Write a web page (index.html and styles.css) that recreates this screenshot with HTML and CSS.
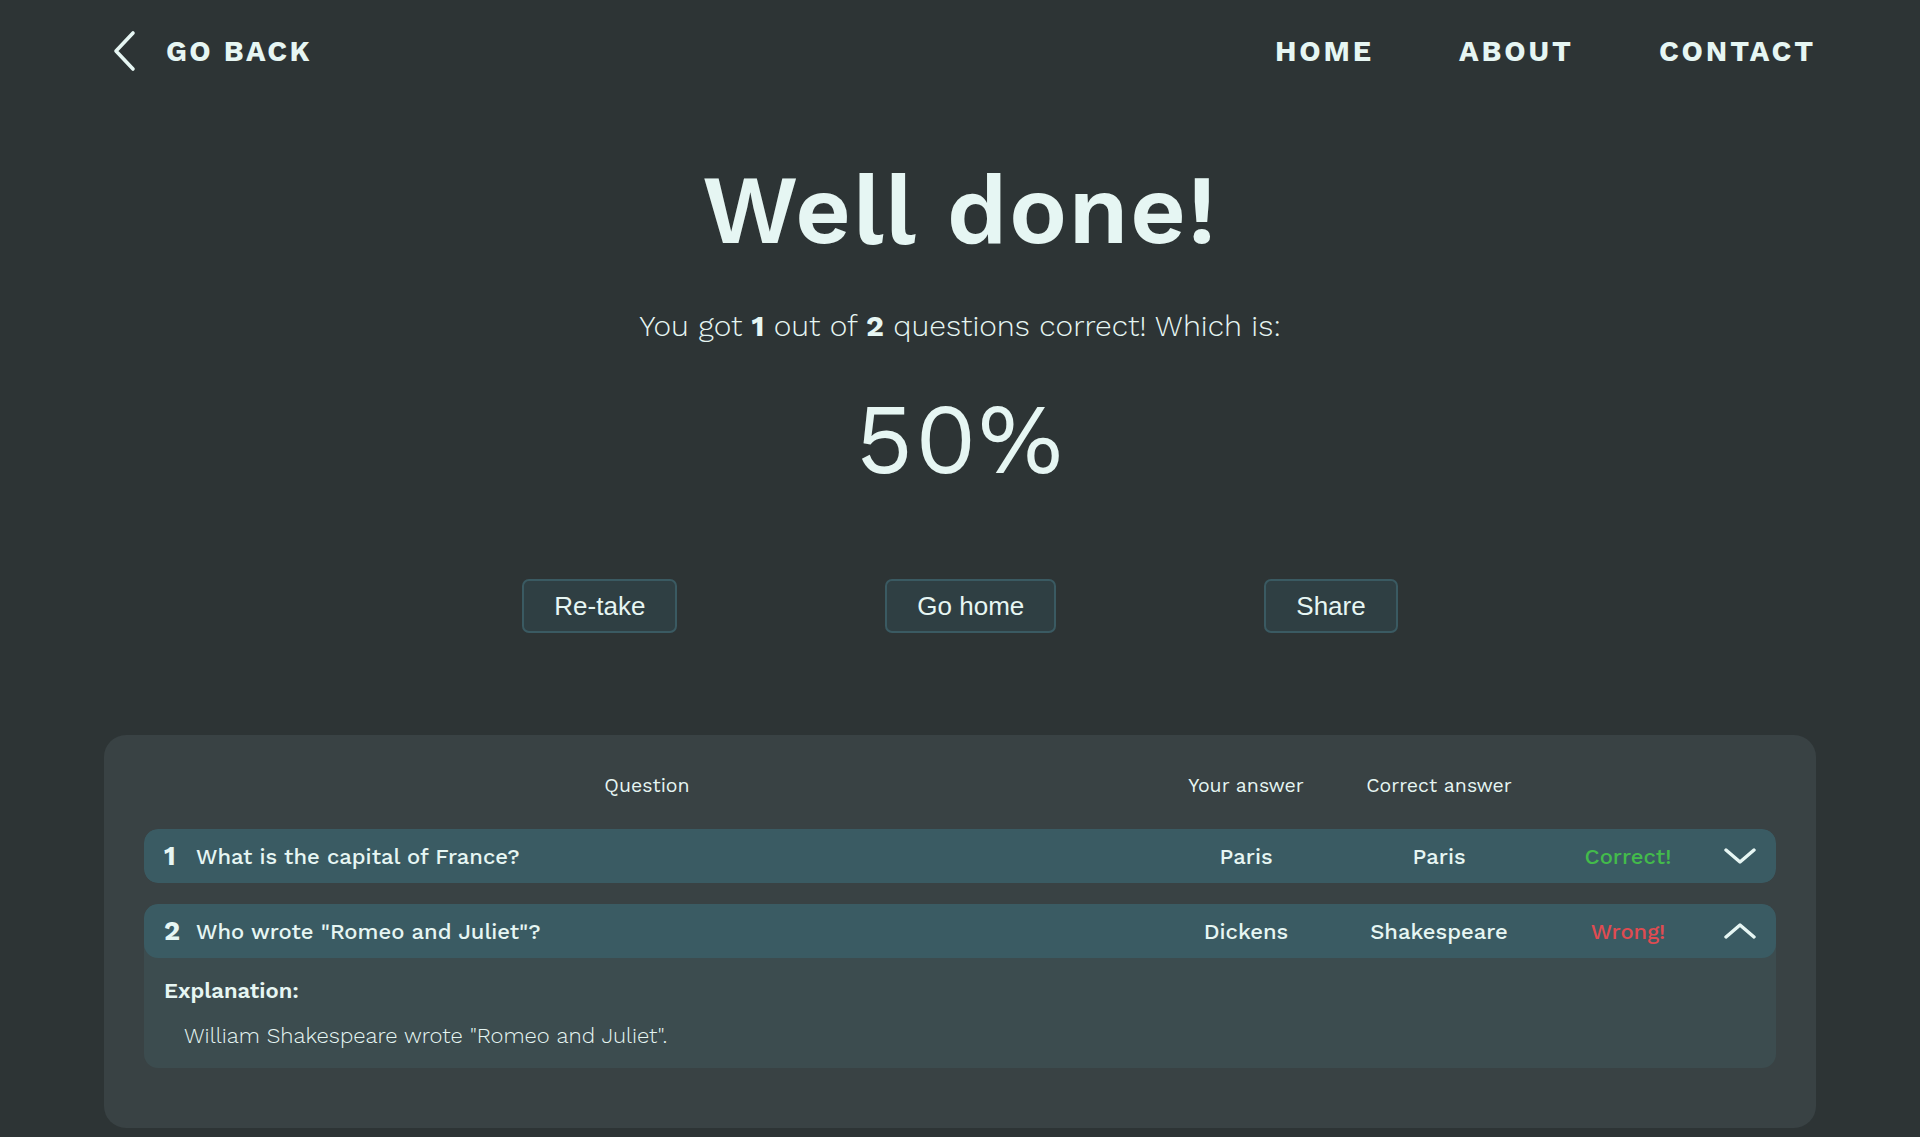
FILE: index.html
```html
<!DOCTYPE html>
<html lang="en">
<head>
<meta charset="utf-8">
<title>Quiz results</title>
<link rel="stylesheet" href="styles.css">
</head>
<body>
<header class="topbar">
  <a class="back" href="#">
    <svg class="back-icon" width="23" height="42" viewBox="0 0 23 42" aria-hidden="true">
      <polyline points="20,3 3,21 20,39" fill="none" stroke="currentColor" stroke-width="3.6" stroke-linecap="round" stroke-linejoin="round"/>
    </svg>
    <span>GO BACK</span>
  </a>
  <nav class="nav">
    <a href="#">HOME</a>
    <a href="#">ABOUT</a>
    <a href="#">CONTACT</a>
  </nav>
</header>

<main>
  <section class="hero">
    <h1 class="title">Well done!</h1>
    <p class="summary">You got <b>1</b> out of <b>2</b> questions correct! Which is:</p>
    <p class="score">50%</p>
    <div class="actions">
      <button class="btn">Re-take</button>
      <button class="btn">Go home</button>
      <button class="btn">Share</button>
    </div>
  </section>

  <section class="results">
    <div class="grid head">
      <span class="h-question">Question</span>
      <span class="center">Your answer</span>
      <span class="center">Correct answer</span>
      <span></span>
      <span></span>
    </div>

    <div class="item">
      <div class="grid row">
        <div class="q"><span class="num">1</span><span>What is the capital of France?</span></div>
        <span class="center">Paris</span>
        <span class="center">Paris</span>
        <span class="center ok">Correct!</span>
        <svg class="chev" width="32" height="16" viewBox="0 0 32 16" aria-hidden="true">
          <polyline points="2,2 16,14 30,2" fill="none" stroke="currentColor" stroke-width="3.4" stroke-linecap="round" stroke-linejoin="round"/>
        </svg>
      </div>
    </div>

    <div class="item open">
      <div class="grid row">
        <div class="q"><span class="num">2</span><span>Who wrote "Romeo and Juliet"?</span></div>
        <span class="center">Dickens</span>
        <span class="center">Shakespeare</span>
        <span class="center bad">Wrong!</span>
        <svg class="chev" width="32" height="16" viewBox="0 0 32 16" aria-hidden="true">
          <polyline points="2,14 16,2 30,14" fill="none" stroke="currentColor" stroke-width="3.4" stroke-linecap="round" stroke-linejoin="round"/>
        </svg>
      </div>
      <div class="explain">
        <p class="explain-title">Explanation:</p>
        <p class="explain-text">William Shakespeare wrote "Romeo and Juliet".</p>
      </div>
    </div>
  </section>
</main>
</body>
</html>
```

FILE: styles.css
```css
* { box-sizing: border-box; }

html, body {
  margin: 0;
  padding: 0;
}

body {
  background: #2d3435;
  color: #e6f6f3;
  font-family: "Work Sans", Inter, "Noto Sans", sans-serif;
  padding-bottom: 9px;
}

a { color: inherit; text-decoration: none; }

/* ---------- top bar ---------- */
.topbar {
  height: 101px;
  padding: 0 104px;
  display: flex;
  align-items: center;
  justify-content: space-between;
}

.back {
  display: flex;
  align-items: center;
  gap: 30px;
  padding-left: 9px;
  font-weight: 700;
  font-size: 29px;
  letter-spacing: 2.4px;
}

.back-icon { display: block; }

.nav {
  display: flex;
  align-items: center;
  gap: 85px;
}

.nav a {
  font-weight: 700;
  font-size: 29px;
  letter-spacing: 2.9px;
}

/* ---------- hero ---------- */
.hero {
  display: flex;
  flex-direction: column;
  align-items: center;
  text-align: center;
}

.title {
  margin: 51px 0 0;
  font-size: 97px;
  line-height: 116px;
  font-weight: 600;
  letter-spacing: 1.5px;
}

.summary {
  margin: 40px 0 0;
  font-size: 30px;
  line-height: 36px;
  font-weight: 300;
}

.summary b { font-weight: 700; }

.score {
  margin: 37px 0 0;
  font-size: 99px;
  line-height: 116px;
  font-weight: 400;
  letter-spacing: 1.5px;
}

.actions {
  margin-top: 82px;
  display: flex;
  gap: 208px;
}

.btn {
  font-family: "Liberation Sans", Arial, sans-serif;
  font-size: 26px;
  line-height: 30px;
  padding: 10px 30px;
  color: #e6f6f3;
  background: #2f3f43;
  border: 2px solid #3a5a62;
  border-radius: 7px;
}

/* ---------- results panel ---------- */
.results {
  margin: 102px 104px 0;
  padding: 40px 40px 60px;
  background: #394244;
  border-radius: 22px;
  display: flex;
  flex-direction: column;
  gap: 21px;
}

.grid {
  display: grid;
  grid-template-columns: 1fr 168px 218px 160px 48px;
  align-items: center;
  padding: 0 20px;
}

.head {
  font-size: 19.5px;
  line-height: 22px;
  font-weight: 400;
  margin-bottom: 11px;
}

.h-question {
  text-align: center;
  padding-right: 32px;
}

.center { text-align: center; }

.item {
  border-radius: 14px;
  overflow: hidden;
}

.item.open {
  background: #3c4c4f;
}

.row {
  height: 54px;
  background: #3a5b63;
  border-radius: 14px;
  font-size: 22px;
  font-weight: 500;
}

.q {
  display: flex;
  align-items: center;
}

.num {
  width: 18px;
  margin-right: 14px;
  font-size: 27px;
  font-weight: 700;
}

.ok { color: #43bb4b; }
.bad { color: #e04b51; }

.chev {
  display: block;
  justify-self: end;
}

.explain {
  padding: 20px 20px 19px;
}

.explain-title {
  margin: 0;
  font-size: 22px;
  line-height: 26px;
  font-weight: 600;
}

.explain-text {
  margin: 19px 0 0 20px;
  font-size: 22px;
  line-height: 26px;
  font-weight: 300;
}
```
